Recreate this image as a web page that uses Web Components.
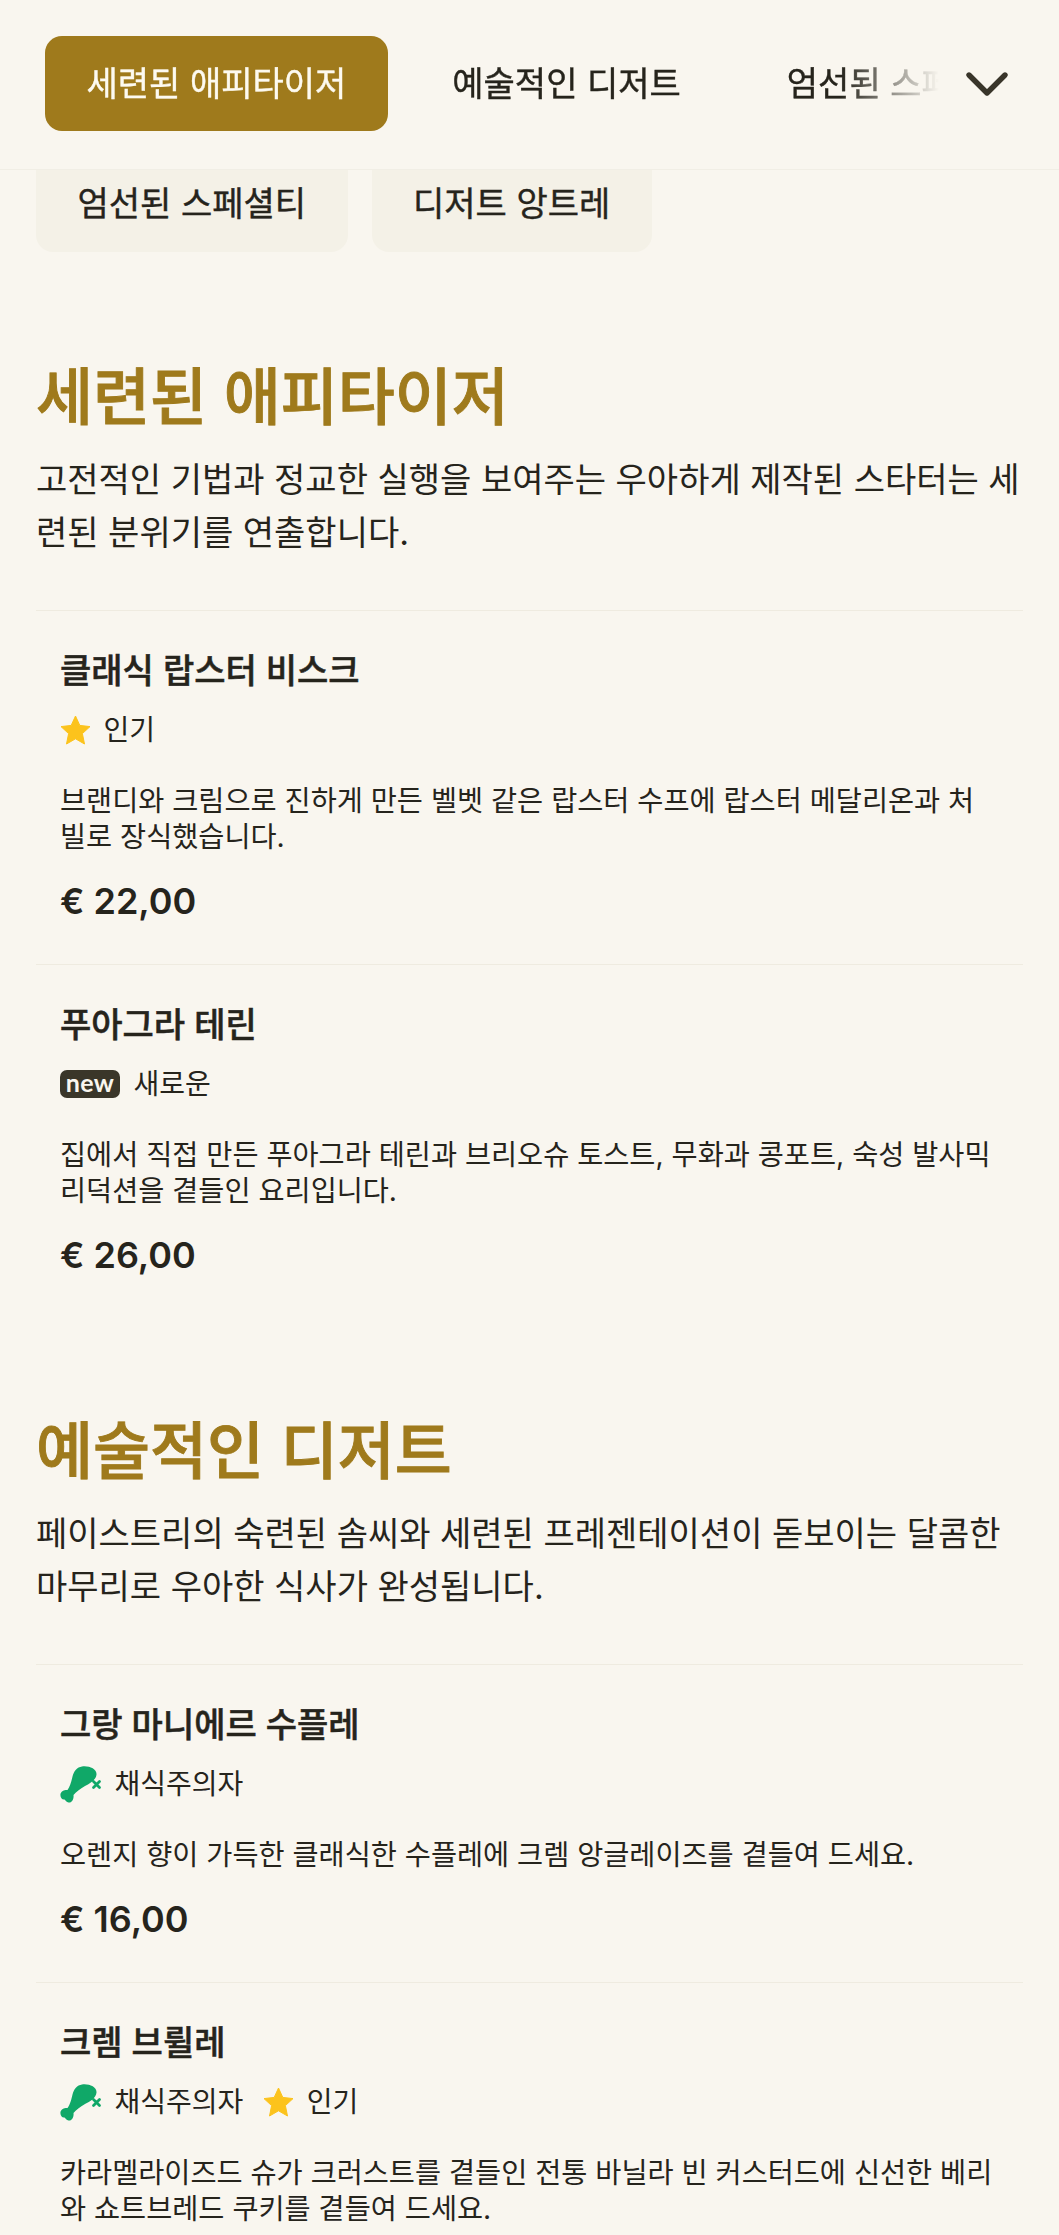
<!DOCTYPE html>
<html lang="ko">
<head>
<meta charset="utf-8">
<title>메뉴</title>
<style>
html, body { margin: 0; height: 2235px; overflow: hidden; background: #f9f6ef; }
body { font-family: Inter, "Noto Sans CJK KR", sans-serif; color: #26241c; }
</style>
</head>
<body>
<menu-tabs>
	<menu-tab active>세련된 애피타이저</menu-tab>
	<menu-tab>예술적인 디저트</menu-tab>
	<menu-tab>엄선된 스페셜티</menu-tab>
	<menu-tab>디저트 앙트레</menu-tab>
</menu-tabs>
<chip-row>
	<menu-chip>엄선된 스페셜티</menu-chip>
	<menu-chip>디저트 앙트레</menu-chip>
</chip-row>

<menu-section title="세련된 애피타이저" description="고전적인 기법과 정교한 실행을 보여주는 우아하게 제작된 스타터는 세련된 분위기를 연출합니다.">
	<menu-item name="클래식 랍스터 비스크" price="€ 22,00" description="브랜디와 크림으로 진하게 만든 벨벳 같은 랍스터 수프에 랍스터 메달리온과 처빌로 장식했습니다.">
		<item-tag icon="star">인기</item-tag>
	</menu-item>
	<menu-item name="푸아그라 테린" price="€ 26,00" description="집에서 직접 만든 푸아그라 테린과 브리오슈 토스트, 무화과 콩포트, 숙성 발사믹 리덕션을 곁들인 요리입니다.">
		<item-tag icon="new">새로운</item-tag>
	</menu-item>
</menu-section>

<menu-section title="예술적인 디저트" description="페이스트리의 숙련된 솜씨와 세련된 프레젠테이션이 돋보이는 달콤한 마무리로 우아한 식사가 완성됩니다.">
	<menu-item name="그랑 마니에르 수플레" price="€ 16,00" description="오렌지 향이 가득한 클래식한 수플레에 크렘 앙글레이즈를 곁들여 드세요.">
		<item-tag icon="veg">채식주의자</item-tag>
	</menu-item>
	<menu-item name="크렘 브륄레" price="€ 14,00" description="카라멜라이즈드 슈가 크러스트를 곁들인 전통 바닐라 빈 커스터드에 신선한 베리와 쇼트브레드 쿠키를 곁들여 드세요.">
		<item-tag icon="veg">채식주의자</item-tag>
		<item-tag icon="star">인기</item-tag>
	</menu-item>
</menu-section>

<script>
class MenuTabs extends HTMLElement {
	constructor() {
		super();
		this.attachShadow({ mode: "open" });
		this.shadowRoot.innerHTML = `
		<style>
			:host {
				display: flex;
				align-items: center;
				height: 169px;
				box-sizing: content-box;
				border-bottom: 1px solid #f1eee5;
				padding-left: 45px;
				padding-right: 50px;
			}
			.scroller {
				flex: 1;
				min-width: 0;
				display: flex;
				gap: 23px;
				overflow: hidden;
				margin-bottom: 2px;
				-webkit-mask-image: linear-gradient(to right, #000 calc(100% - 100px), transparent calc(100% - 2px));
				mask-image: linear-gradient(to right, #000 calc(100% - 100px), transparent calc(100% - 2px));
			}
			svg { flex: none; margin-left: 24px; margin-bottom: 2px; display: block; }
		</style>
		<div class="scroller"><slot></slot></div>
		<svg width="44" height="28" viewBox="0 0 44 28" fill="none" stroke="#39352a" stroke-width="5.4" stroke-linecap="round" stroke-linejoin="round"><path d="M4 5 L22 23 L40 5"/></svg>
		`;
	}
}
customElements.define("menu-tabs", MenuTabs);

class MenuTab extends HTMLElement {
	constructor() {
		super();
		this.attachShadow({ mode: "open" });
		this.shadowRoot.innerHTML = `
		<style>
			:host {
				display: flex;
				flex: none;
				align-items: center;
				box-sizing: border-box;
				height: 95px;
				padding: 0 41.5px 4px;
				border-radius: 17px;
				font-size: 34px;
				-webkit-text-stroke: 0.4px currentColor;
				white-space: nowrap;
			}
			:host([active]) { background: #9f7a1c; color: #fdfaf0; }
		</style>
		<slot></slot>
		`;
	}
}
customElements.define("menu-tab", MenuTab);

class ChipRow extends HTMLElement {
	constructor() {
		super();
		this.attachShadow({ mode: "open" });
		this.shadowRoot.innerHTML = `
		<style>
			:host { display: flex; gap: 24px; padding-left: 36px; }
		</style>
		<slot></slot>
		`;
	}
}
customElements.define("chip-row", ChipRow);

class MenuChip extends HTMLElement {
	constructor() {
		super();
		this.attachShadow({ mode: "open" });
		this.shadowRoot.innerHTML = `
		<style>
			:host {
				display: flex;
				align-items: center;
				height: 82px;
				padding: 0 41.5px 20px;
				box-sizing: border-box;
				background: #f4f1e7;
				border-radius: 0 0 17px 17px;
				font-size: 34px;
				-webkit-text-stroke: 0.4px currentColor;
				white-space: nowrap;
			}
		</style>
		<slot></slot>
		`;
	}
}
customElements.define("menu-chip", MenuChip);

class MenuSection extends HTMLElement {
	constructor() {
		super();
		this.attachShadow({ mode: "open" });
		this.shadowRoot.innerHTML = `
		<style>
			:host { display: block; padding: 0 36px; margin-top: 97px; }
			:host(:first-of-type) { margin-top: 109px; }
			h2 {
				margin: 0;
				font-size: 62px;
				line-height: 74px;
				font-weight: 500;
				-webkit-text-stroke: 0.9px currentColor;
				color: #9f7a1c;
			}
			p {
				margin: 18px 0 51px;
				font-size: 34px;
				line-height: 53px;
			}
		</style>
		<h2>${this.getAttribute("title")}</h2>
		<p>${this.getAttribute("description")}</p>
		<slot></slot>
		`;
	}
}
customElements.define("menu-section", MenuSection);

class MenuItem extends HTMLElement {
	constructor() {
		super();
		this.attachShadow({ mode: "open" });
		this.shadowRoot.innerHTML = `
		<style>
			:host {
				display: block;
				border-top: 1px solid #efebe0;
				padding: 38px 24px 41px;
			}
			h3 {
				margin: 0;
				font-size: 34px;
				line-height: 44px;
				font-weight: 500;
				-webkit-text-stroke: 0.5px currentColor;
			}
			.tags { display: flex; gap: 20px; margin-top: 19px; height: 36px; }
			p {
				margin: 35px 0 0;
				font-size: 28.35px;
				line-height: 36px;
			}
			.price {
				margin-top: 24px;
				font-size: 36px;
				line-height: 44px;
				font-weight: 600;
			}
		</style>
		<h3>${this.getAttribute("name")}</h3>
		<div class="tags"><slot></slot></div>
		<p>${this.getAttribute("description")}</p>
		<div class="price">${this.getAttribute("price")}</div>
		`;
	}
}
customElements.define("menu-item", MenuItem);

const TAG_ICONS = {
	star: `<svg width="31" height="30" viewBox="0 0 31 30"><path fill="#fcc31c" stroke="#fcc31c" stroke-width="1" stroke-linejoin="round" d="M15.5 1 L19.8 10.4 L30 11.6 L22.4 18.6 L24.5 29 L15.5 23.8 L6.5 29 L8.6 18.6 L1 11.6 L11.2 10.4 Z"/></svg>`,
	new: `<span class="new">new</span>`,
	veg: `<svg width="42" height="37" viewBox="0 0 42 37"><path fill="#10a868" d="M22 0.5 C29 -0.5 37 3 36.5 8.5 C36 14 30 17.5 25 20 C20 23 16 26 13.5 29 C14 32 12.5 37 8.5 36.5 C6.5 36.3 5.5 34.5 4.5 33.5 C1.5 34 -0.5 30 0.8 27 C2 24.5 5 24 7.5 24 C10 21 11.5 15 12.5 10.5 C14 5 17 1.2 22 0.5 Z"/><path fill="none" stroke="#10a868" stroke-width="2.8" stroke-linecap="round" d="M33.5 15.5 L39.5 21.5 M39.5 15.5 L33.5 21.5"/></svg>`
};

class ItemTag extends HTMLElement {
	constructor() {
		super();
		this.attachShadow({ mode: "open" });
		this.shadowRoot.innerHTML = `
		<style>
			:host {
				display: flex;
				align-items: center;
				gap: 12.5px;
				font-size: 28px;
				line-height: 36px;
				white-space: nowrap;
			}
			svg { display: block; flex: none; }
			.new {
				display: block;
				background: #3a3629;
				color: #f9f6ef;
				border-radius: 7px;
				width: 60px;
				height: 28px;
				line-height: 25px;
				text-align: center;
				font-family: Lato, sans-serif;
				font-size: 25px;
				font-weight: 700;
				letter-spacing: 0.4px;
				margin-right: 1px;
			}
		</style>
		${TAG_ICONS[this.getAttribute("icon")]}
		<slot></slot>
		`;
	}
}
customElements.define("item-tag", ItemTag);
</script>
</body>
</html>
